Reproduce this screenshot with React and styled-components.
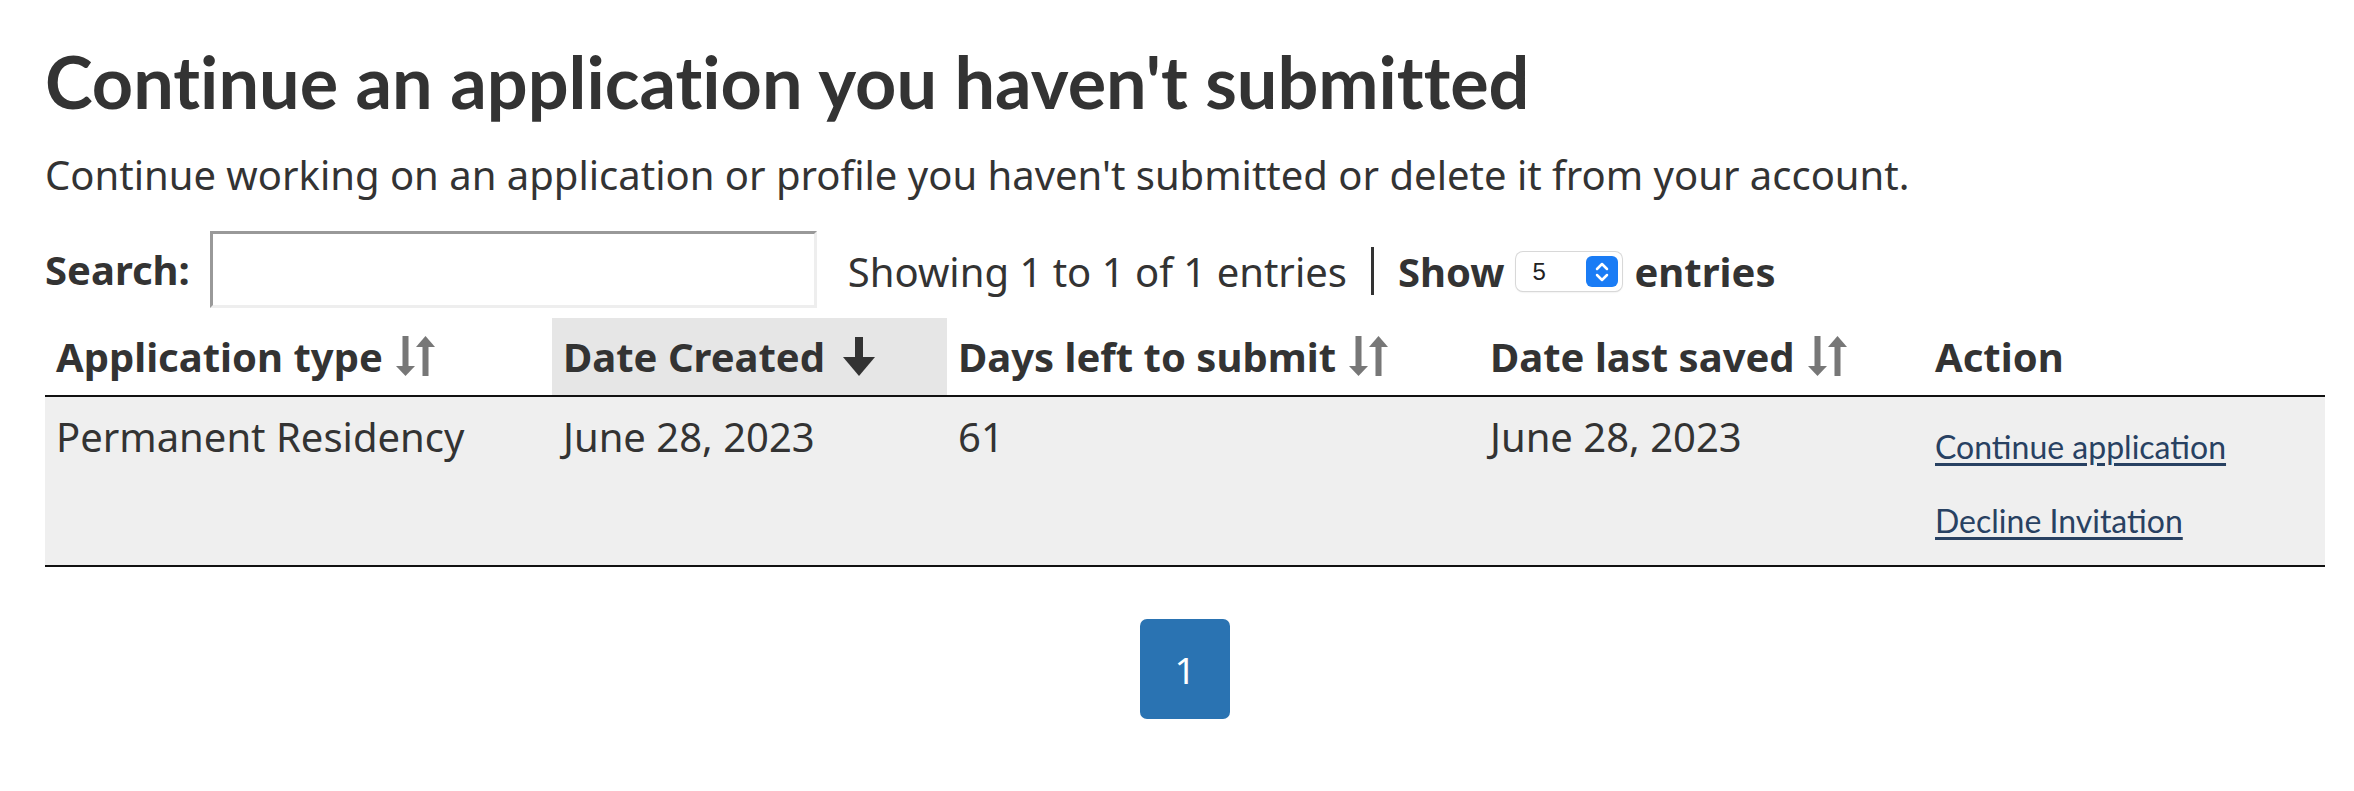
import styled, { createGlobalStyle } from "styled-components";

const Global = createGlobalStyle`
  body {
    margin: 0;
    background: #fff;
    color: #333;
    font-family: "Noto Sans", "Open Sans", sans-serif;
  }
`;

const Page = styled.div`
  padding: 38px 29px 40px 45px;
`;

const Title = styled.h1`
  margin: 0;
  font-family: Lato, sans-serif;
  font-weight: 700;
  font-size: 72px;
  line-height: 1.2;
  font-variant-ligatures: none;
  color: #333;
`;

const Lead = styled.p`
  margin: 21px 0 0;
  font-size: 40px;
  line-height: 1.5;
`;

const Controls = styled.div`
  display: flex;
  align-items: center;
  margin-top: 26px;
  font-size: 40px;
  .label {
    font-weight: 700;
    margin-right: 20px;
  }
  .info {
    margin-left: 31px;
    margin-top: 3px;
  }
  .sep {
    width: 3px;
    height: 48px;
    background: #333;
    margin: 3px 24px 0;
  }
  .bold {
    font-weight: 700;
    margin-top: 3px;
  }
`;

const SearchBox = styled.input`
  width: 607px;
  height: 77px;
  box-sizing: border-box;
  border: 3px solid;
  border-color: #999 #eee #eee #999;
  background: #fff;
  outline: none;
`;

const FakeSelect = styled.div`
  display: flex;
  align-items: center;
  justify-content: space-between;
  width: 106px;
  height: 39px;
  box-sizing: border-box;
  margin: 4px 12px 0;
  padding: 0 4px 0 16px;
  border-radius: 7px;
  background: #fff;
  box-shadow: 0 0 0 1px #d8d8d8, 0 1px 2px rgba(0, 0, 0, 0.15);
  font-family: "Liberation Sans", Arial, sans-serif;
  font-size: 24px;
  color: #222;
  .step {
    width: 32px;
    height: 31px;
    border-radius: 6px;
    background: #1a7cf5;
    display: flex;
    align-items: center;
    justify-content: center;
  }
`;

const Table = styled.table`
  width: 2280px;
  margin-top: 10px;
  border-collapse: collapse;
  table-layout: fixed;
  border-bottom: 2px solid #111;
`;

const Th = styled.th`
  height: 77px;
  padding: 0 11px;
  text-align: left;
  font-size: 40px;
  font-weight: 700;
  white-space: nowrap;
  border-bottom: 2px solid #111;
  background: ${(p) => (p.$sorted ? "#e6e6e6" : "transparent")};
  svg {
    vertical-align: -4px;
    margin-left: ${(p) => (p.$sorted ? "18px" : "13px")};
  }
`;

const Td = styled.td`
  vertical-align: top;
  padding: 10px 11px 0;
  height: 158px;
  font-size: 40px;
  line-height: 1.5;
  background: #efefef;
  border-top: 2px solid #ddd;
`;

const ActionLink = styled.a`
  display: block;
  font-family: Lato, sans-serif;
  font-size: 32px;
  color: #284162;
  text-decoration: underline;
  text-underline-offset: 4px;
  margin-top: ${(p) => (p.$first ? "16px" : "26px")};
`;

const Pager = styled.div`
  display: flex;
  justify-content: center;
  width: 2280px;
  margin-top: 52px;
`;

const PageBtn = styled.button`
  width: 90px;
  height: 100px;
  border: none;
  border-radius: 7px;
  background: #2a73b2;
  color: #fff;
  font-family: "Noto Sans", sans-serif;
  font-size: 37px;
`;

const SortBoth = () => (
  <svg width="40" height="40" viewBox="0 0 40 40" fill="#777">
    <rect x="6.5" y="0" width="6" height="31" />
    <polygon points="0,30 19,30 9.5,40" />
    <rect x="26.5" y="10" width="6" height="30" />
    <polygon points="20,11 39,11 29.5,0" />
  </svg>
);

const SortDown = () => (
  <svg width="32" height="39" viewBox="0 0 32 39" fill="#333">
    <rect x="12" y="0" width="8" height="22" />
    <polygon points="0,20 32,20 16,39" />
  </svg>
);

const Stepper = () => (
  <svg width="16" height="24" viewBox="0 0 16 24" fill="none" stroke="#fff" strokeWidth="2.5" strokeLinecap="round" strokeLinejoin="round">
    <polyline points="3,9 8,4 13,9" />
    <polyline points="3,15 8,20 13,15" />
  </svg>
);

export default function App() {
  return (
    <Page>
      <Global />
      <Title>Continue an application you haven't submitted</Title>
      <Lead>
        Continue working on an application or profile you haven't submitted or
        delete it from your account.
      </Lead>
      <Controls>
        <span className="label">Search:</span>
        <SearchBox type="text" />
        <span className="info">Showing 1 to 1 of 1 entries</span>
        <span className="sep" />
        <span className="bold">Show</span>
        <FakeSelect>
          <span>5</span>
          <span className="step">
            <Stepper />
          </span>
        </FakeSelect>
        <span className="bold">entries</span>
      </Controls>
      <Table>
        <colgroup>
          <col style={{ width: 507 }} />
          <col style={{ width: 395 }} />
          <col style={{ width: 532 }} />
          <col style={{ width: 445 }} />
          <col />
        </colgroup>
        <thead>
          <tr>
            <Th>
              Application type
              <SortBoth />
            </Th>
            <Th $sorted>
              Date Created
              <SortDown />
            </Th>
            <Th>
              Days left to submit
              <SortBoth />
            </Th>
            <Th>
              Date last saved
              <SortBoth />
            </Th>
            <Th>Action</Th>
          </tr>
        </thead>
        <tbody>
          <tr>
            <Td>Permanent Residency</Td>
            <Td>June 28, 2023</Td>
            <Td>61</Td>
            <Td>June 28, 2023</Td>
            <Td>
              <ActionLink href="#" $first>
                Continue application
              </ActionLink>
              <ActionLink href="#">Decline Invitation</ActionLink>
            </Td>
          </tr>
        </tbody>
      </Table>
      <Pager>
        <PageBtn>1</PageBtn>
      </Pager>
    </Page>
  );
}
